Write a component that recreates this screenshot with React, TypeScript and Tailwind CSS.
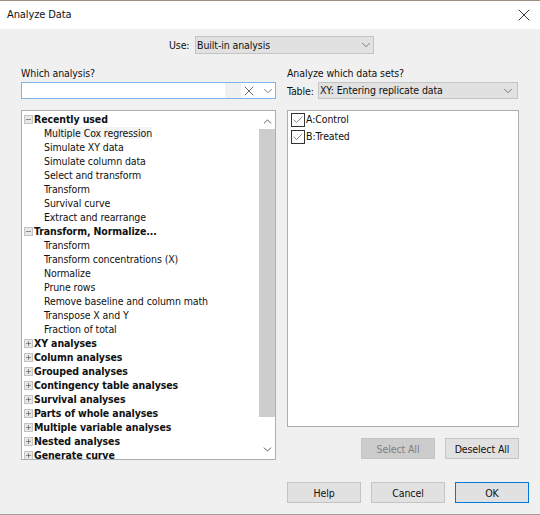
import { Check, ChevronDown, ChevronUp, Minus, Plus, X } from "lucide-react";

const font = { fontFamily: "'DejaVu Sans Condensed', 'Noto Sans', sans-serif" };

const tree = [
  {
    name: "Recently used",
    open: true,
    items: [
      "Multiple Cox regression",
      "Simulate XY data",
      "Simulate column data",
      "Select and transform",
      "Transform",
      "Survival curve",
      "Extract and rearrange",
    ],
  },
  {
    name: "Transform, Normalize...",
    open: true,
    items: [
      "Transform",
      "Transform concentrations (X)",
      "Normalize",
      "Prune rows",
      "Remove baseline and column math",
      "Transpose X and Y",
      "Fraction of total",
    ],
  },
  { name: "XY analyses", open: false, items: [] },
  { name: "Column analyses", open: false, items: [] },
  { name: "Grouped analyses", open: false, items: [] },
  { name: "Contingency table analyses", open: false, items: [] },
  { name: "Survival analyses", open: false, items: [] },
  { name: "Parts of whole analyses", open: false, items: [] },
  { name: "Multiple variable analyses", open: false, items: [] },
  { name: "Nested analyses", open: false, items: [] },
  { name: "Generate curve", open: false, items: [] },
];

const Btn = ({ label, cls = "bg-[#e1e1e1] border-[#c4c4c4] text-[#111]" }: { label: string; cls?: string }) => (
  <button className={`w-[74px] h-[21px] pt-[2px] flex items-center justify-center border ${cls}`}>
    {label}
  </button>
);

const Select = ({ label, cls }: { label: string; cls: string }) => (
  <div className={`flex items-center justify-between bg-[#e1e1e1] border border-[#c4c4c4] pl-[1px] ${cls}`}>
    <span className="pt-[1px]">{label}</span>
    <ChevronDown size={14} strokeWidth={1.1} className="text-[#444]" />
  </div>
);

export default function App() {
  return (
    <div style={font} className="w-[540px] h-[515px] flex flex-col bg-[#f0f0f0] text-[10.5px] tracking-[-0.1px] text-[#111] overflow-hidden border-t border-[#9a8f80] border-b border-b-[#a0a0a0]">
      {/* title bar */}
      <div className="h-[28px] shrink-0 bg-white flex items-center justify-between pl-[7px] pr-[6px]">
        <span className="text-[11px] pt-[1px]">Analyze Data</span>
        <X size={20} strokeWidth={1} className="text-[#111]" />
      </div>

      <div className="flex items-center h-[18px] mt-[7px] ml-[169px]">
        <span className="w-[26px] mt-[2px]">Use:</span>
        <Select label="Built-in analysis" cls="w-[179px] h-[18px] pr-[0px]" />
      </div>

      <div className="flex mt-[10px] pl-[21px] gap-[11px]">
        {/* left column */}
        <div className="w-[255px] flex flex-col">
          <div className="h-[18px] leading-[18px]">Which analysis?</div>
          <div className="h-[17px] bg-white border border-[#7eb4ea] flex items-center justify-end">
            <div className="w-[16px] h-[15px] bg-[#f0f0f0]" />
            <div className="w-[16px] mr-[4px] flex justify-center">
              <X size={16} strokeWidth={1.1} className="text-[#333]" />
            </div>
            <div className="w-[14px] flex justify-center">
              <ChevronDown size={14} strokeWidth={1.1} className="text-[#444]" />
            </div>
          </div>
          <div className="mt-[11px] h-[350px] bg-white border border-[#a9b0b5] flex overflow-hidden">
            <div className="flex-1 overflow-hidden pl-[2px] pt-[1px]">
              {tree.map((g) => (
                <div key={g.name}>
                  <div className="h-[14px] flex items-center gap-[1px] font-bold leading-[14px] whitespace-nowrap">
                    <span className="w-[9px] h-[9px] bg-[#e8e8e8] border border-[#c4c4c4] flex items-center justify-center text-[#444]">
                      {g.open ? <Minus size={7} strokeWidth={2} /> : <Plus size={7} strokeWidth={2} />}
                    </span>
                    <span>{g.name}</span>
                  </div>
                  {g.items.map((t, i) => (
                    <div key={t} className="h-[14px] leading-[14px] pl-[20px] whitespace-nowrap">
                      <span className={g.name === "Recently used" && i === 0 ? "bg-[#f4f4f4]" : ""}>{t}</span>
                    </div>
                  ))}
                </div>
              ))}
            </div>
            <div className="w-[16px] flex flex-col items-center shrink-0">
              <div className="h-[18px] pt-[2px] flex items-center justify-center">
                <ChevronUp size={13} strokeWidth={1.6} className="text-[#444]" />
              </div>
              <div className="w-full h-[288px] bg-[#cdcdcd]" />
              <div className="flex-1 flex items-end pb-[3px]">
                <ChevronDown size={13} strokeWidth={1.6} className="text-[#444]" />
              </div>
            </div>
          </div>
        </div>

        {/* right column */}
        <div className="w-[232px] flex flex-col">
          <div className="h-[18px] leading-[18px]">Analyze which data sets?</div>
          <div className="flex items-center h-[17px]">
            <span className="w-[31px] mt-[2px]">Table:</span>
            <Select label="XY: Entering replicate data" cls="w-[200px] h-[17px] pr-[2px]" />
          </div>
          <div className="mt-[11px] h-[317px] bg-white border border-[#a9b0b5] pl-[3px] pt-[1px]">
            {["A:Control", "B:Treated"].map((t) => (
              <div key={t} className="h-[16.5px] flex items-center">
                <span className="w-[14px] h-[14px] mr-[1px] border border-[#333] flex items-center justify-center">
                  <Check size={12} strokeWidth={1} />
                </span>
                <span>{t}</span>
              </div>
            ))}
          </div>
          <div className="flex justify-end gap-[10px] mt-[11px]">
            <Btn label="Select All" cls="bg-[#cccccc] border-[#c4c4c4] text-[#808080]" />
            <Btn label="Deselect All" />
          </div>
        </div>
      </div>

      <div className="flex justify-end gap-[10px] mt-[22px] pr-[11px]">
        <Btn label="Help" />
        <Btn label="Cancel" />
        <Btn label="OK" cls="bg-[#e1e1e1] text-[#111] border-[#0078d7]" />
      </div>
    </div>
  );
}
